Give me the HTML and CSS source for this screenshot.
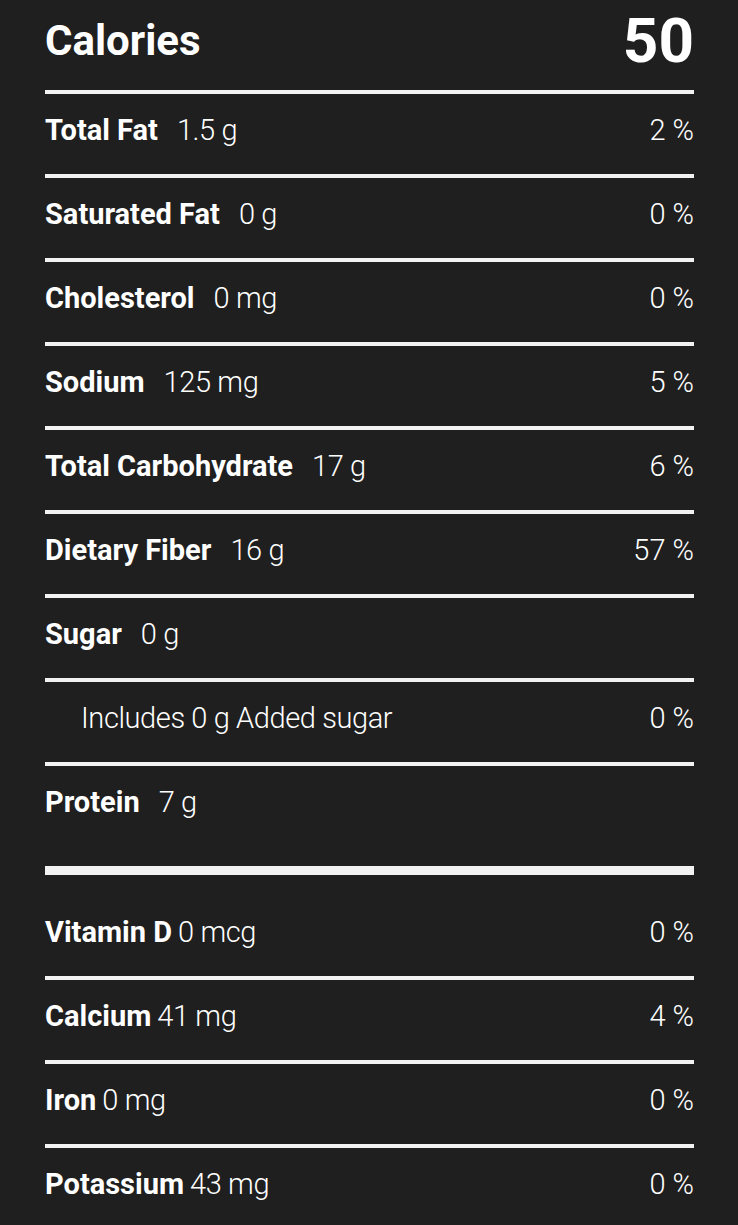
FILE: index.html
```
<!DOCTYPE html>
<html>
<head>
    <meta charset="utf-8">
    <title>Nutrition Facts</title>
    <link rel="stylesheet" href="styles.css">
</head>
<body>
    <div class="facts">
        <div class="calories">
            <span class="calories-label">Calories</span>
            <span class="calories-value">50</span>
        </div>

        <div class="row">
            <span class="name">Total Fat</span><span class="amount">1.5 g</span>
            <span class="dv">2 %</span>
        </div>
        <div class="row">
            <span class="name">Saturated Fat</span><span class="amount">0 g</span>
            <span class="dv">0 %</span>
        </div>
        <div class="row">
            <span class="name">Cholesterol</span><span class="amount">0 mg</span>
            <span class="dv">0 %</span>
        </div>
        <div class="row">
            <span class="name">Sodium</span><span class="amount">125 mg</span>
            <span class="dv">5 %</span>
        </div>
        <div class="row">
            <span class="name">Total Carbohydrate</span><span class="amount">17 g</span>
            <span class="dv">6 %</span>
        </div>
        <div class="row">
            <span class="name">Dietary Fiber</span><span class="amount">16 g</span>
            <span class="dv">57 %</span>
        </div>
        <div class="row">
            <span class="name">Sugar</span><span class="amount">0 g</span>
        </div>
        <div class="row sub">
            <span class="amount">Includes 0 g Added sugar</span>
            <span class="dv">0 %</span>
        </div>
        <div class="row last">
            <span class="name">Protein</span><span class="amount">7 g</span>
        </div>

        <div class="vitamins">
            <div class="row tight">
                <span class="name">Vitamin D</span><span class="amount">0 mcg</span>
                <span class="dv">0 %</span>
            </div>
            <div class="row tight">
                <span class="name">Calcium</span><span class="amount">41 mg</span>
                <span class="dv">4 %</span>
            </div>
            <div class="row tight">
                <span class="name">Iron</span><span class="amount">0 mg</span>
                <span class="dv">0 %</span>
            </div>
            <div class="row tight last">
                <span class="name">Potassium</span><span class="amount">43 mg</span>
                <span class="dv">0 %</span>
            </div>
        </div>
    </div>
</body>
</html>
```

FILE: styles.css
```
body {
    margin: 0;
    background-color: #1f1f1f;
    color: #fff;
    font-family: Roboto, "Liberation Sans", sans-serif;
}
.facts {
    padding: 0 44px 0 45px;
}
.calories {
    display: flex;
    justify-content: space-between;
    align-items: center;
    height: 90px;
    border-bottom: 4px solid #f2f2f2;
}
.calories-label {
    font-size: 42px;
    font-weight: 700;
    margin-top: -9px;
}
.calories-value {
    font-size: 62px;
    font-weight: 700;
    margin-top: -10px;
}
.row {
    display: flex;
    align-items: center;
    height: 80px;
    border-bottom: 4px solid #f2f2f2;
    font-size: 29px;
}
.row .name {
    font-weight: 700;
    margin-top: -8px;
}
.row .amount {
    font-weight: 300;
    letter-spacing: -0.4px;
    margin-left: 19px;
    margin-top: -8px;
}
.row .dv {
    font-weight: 300;
    margin-left: auto;
    margin-top: -8px;
}
.row.sub .amount {
    margin-left: 36px;
}
.row.last {
    border-bottom: none;
}
.vitamins {
    margin-top: 20px;
    border-top: 9px solid #f2f2f2;
    padding-top: 21px;
}
.row.tight .amount {
    margin-left: 6px;
}
```
